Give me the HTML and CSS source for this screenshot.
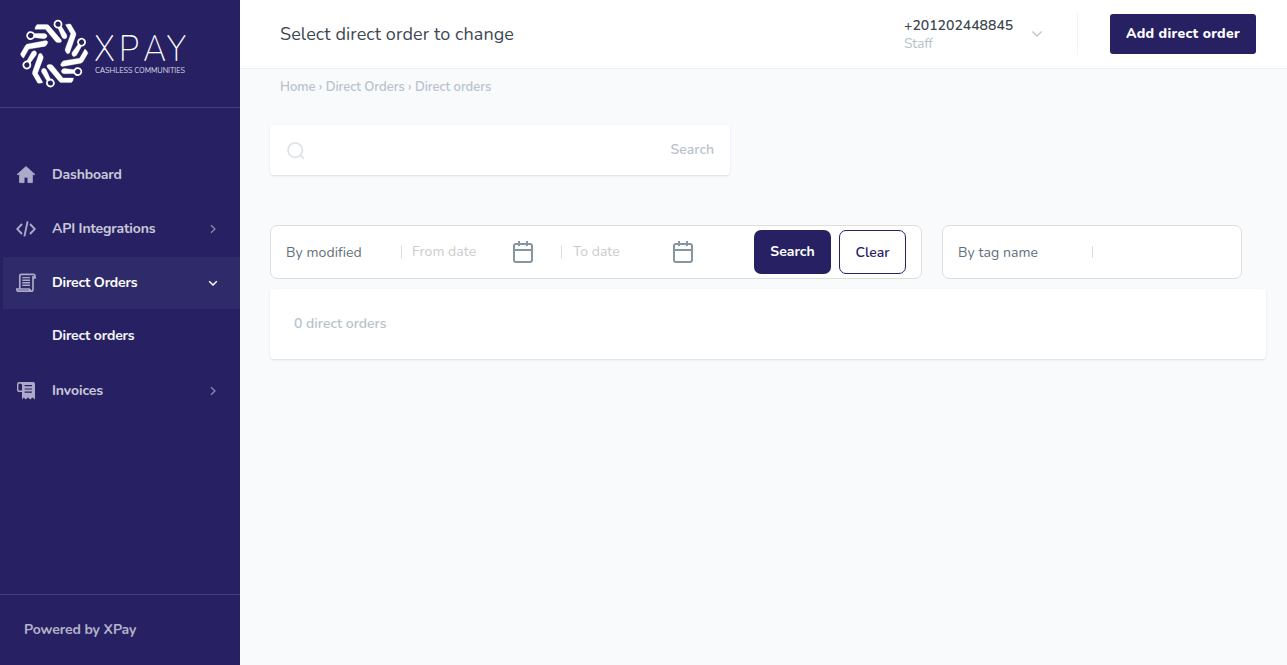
FILE: index.html
```
<!DOCTYPE html>
<html lang="en">
<head>
<meta charset="utf-8">
<title>Select direct order to change</title>
<link rel="stylesheet" href="styles.css">
</head>
<body>
<div class="app">
  <aside class="sidebar">
    <div class="brand">
      <svg width="240" height="107" viewBox="0 0 240 107">
        <defs>
          <g id="arm">
            <path class="bar" d="M-17.2-29H-7.6Q-6-29-5-27.8L7.2-13.5Q7.4-11 6-11H3.6Q2.2-11 1.4-12L-8.8-24.3H-19.4Q-19-27.5-17.2-29Z"/>
            <path class="bar" d="M3.6-26L7.4-27.2L12.6-18.5Q13.2-15.4 11.2-14.8Q8.8-14.4 7.8-16.4Z"/>
            <circle class="node" cx="3.8" cy="-29.4" r="3.5"/>
          </g>
        </defs>
        <g transform="translate(54.2 53.6)">
          <use href="#arm"/>
          <use href="#arm" transform="rotate(60)"/>
          <use href="#arm" transform="rotate(120)"/>
          <use href="#arm" transform="rotate(180)"/>
          <use href="#arm" transform="rotate(240)"/>
          <use href="#arm" transform="rotate(300)"/>
        </g>
        <text class="wordmark" transform="scale(.9 1)" x="104.6 132.2 159 185.6" y="61.5">XPAY</text>
        <text class="tagline" x="95" y="72.5" textLength="90">CASHLESS COMMUNITIES</text>
      </svg>
    </div>
    <nav class="menu">
      <a class="item"><svg class="icon" viewBox="0 0 20 20"><path d="M10 1.5L19 9.6H16.4V17.6H11.9V12.2H8.1V17.6H3.6V9.6H1Z" fill="currentColor" stroke="currentColor" stroke-width=".8" stroke-linejoin="round"/></svg><span>Dashboard</span></a>
      <a class="item"><svg class="icon line" viewBox="0 0 20 20"><path d="M6 5L1.2 10L6 15M14 5L18.8 10L14 15M11.6 2.4L8.4 17.4"/></svg><span>API Integrations</span><svg class="chev" viewBox="0 0 10 10"><path d="M3 1.2L7 5L3 8.8"/></svg></a>
      <a class="item active"><svg class="icon" viewBox="0 0 20 20"><path class="scroll" d="M3.8 16V3Q3.8 1.3 5.5 1.3H17.2Q19 1.3 19 3.2V5H17V16.5Q17 18.2 15 18.2H2.5Q.8 18.2.8 16H13Q13 17 15 17M17 5V3"/><path class="thin" d="M6.3 4.6H14M6.3 7.2H14M6.3 9.8H14M6.3 12.3H14"/></svg><span>Direct Orders</span><svg class="chev" viewBox="0 0 10 10"><path d="M1.2 3.2L5 7L8.8 3.2"/></svg></a>
      <a class="item sub"><span>Direct orders</span></a>
      <a class="item last"><svg class="icon" viewBox="0 0 20 20"><path fill="currentColor" fill-rule="evenodd" d="M3.2 1H17Q19 1 19 3V18.5L16.6 16.5L14.2 18.5L12 16.5L9.6 18.5L7.8 16.5L6 18.5V11H3Q1 11 1 9V3.2Q1 1 3.2 1ZM3.8 2.4Q2.4 2.4 2.4 4V8.2Q2.4 9.6 4 9.6H6V4Q6 2.4 3.8 2.4Z"/><path class="rows" d="M8.6 4.7H16M8.6 8H16M8.6 11.2H16"/></svg><span>Invoices</span><svg class="chev" viewBox="0 0 10 10"><path d="M3 1.2L7 5L3 8.8"/></svg></a>
    </nav>
    <div class="powered"><span>Powered by XPay</span></div>
  </aside>
  <div class="page">
    <header class="topbar">
      <h1>Select direct order to change</h1>
      <div class="user"><span class="phone">+201202448845</span><span class="role">Staff</span></div>
      <svg class="user-chev" viewBox="0 0 12 12"><path d="M1.5 3.5L6 8.2L10.5 3.5"/></svg>
      <div class="divider"></div>
      <button class="add">Add direct order</button>
    </header>
    <main>
      <div class="crumbs">Home › Direct Orders › Direct orders</div>
      <div class="search card">
        <svg class="mag" viewBox="0 0 20 20"><circle cx="9.2" cy="9.2" r="7.2"/><path d="M14.4 14.4L18 18"/></svg>
        <span>Search</span>
      </div>
      <div class="filters">
        <div class="filter modified">
          <label>By modified</label>
          <div class="date from"><span>From date</span><svg class="cal" viewBox="0 0 20 22"><path d="M3 3H17Q19 3 19 5V19Q19 21 17 21H3Q1 21 1 19V5Q1 3 3 3ZM1 9H19M6 0V5M14 0V5"/></svg></div>
          <div class="date to"><span>To date</span><svg class="cal" viewBox="0 0 20 22"><path d="M3 3H17Q19 3 19 5V19Q19 21 17 21H3Q1 21 1 19V5Q1 3 3 3ZM1 9H19M6 0V5M14 0V5"/></svg></div>
          <button class="go">Search</button>
          <button class="clear">Clear</button>
        </div>
        <div class="filter tag"><label>By tag name</label><div class="date"></div></div>
      </div>
      <div class="results card"><span>0 direct orders</span></div>
    </main>
  </div>
</div>
</body>
</html>
```
FILE: styles.css
```
* { box-sizing: border-box; }
body { margin: 0; font-family: Nunito, Lato, sans-serif; font-size: 14px; line-height: 20px; background: #f9fafc; color: #3d4852; overflow: hidden; }
svg { display: block; flex: none; }
span { white-space: nowrap; }
button { font: inherit; padding: 0; border: 0; }
.app { display: flex; height: 665px; }

.sidebar { width: 240px; flex: none; background: #272163; display: flex; flex-direction: column; color: rgba(255,255,255,.77); font-weight: 700; letter-spacing: -.17px; }
.brand { height: 108px; border-bottom: 1px solid #46417a; letter-spacing: 0; }
.bar { fill: #fff; stroke: #fff; stroke-width: .3; }
.node { fill: #272163; stroke: #fff; stroke-width: 1.8; }
.wordmark { font-size: 36px; font-weight: 250; fill: #fff; }
.tagline { font-size: 7.4px; font-weight: 400; fill: #dddcea; }
.menu { flex: 1; padding-top: 41px; }
.item { display: flex; align-items: center; height: 52px; margin: 0 0 2px 3px; padding: 0 22px 0 13px; }
.item span { flex: 1; }
.icon { width: 20px; height: 20px; margin: 0 16px 0 0; color: #ada9c8; fill: none; }
.icon.line { stroke: currentColor; stroke-width: 1.9; }
.scroll { stroke: currentColor; stroke-width: 1.7; }
.thin { stroke: currentColor; stroke-width: 1.4; }
.rows { stroke: #272163; stroke-width: 1.2; }
.chev { width: 10px; height: 10px; fill: none; stroke: #908db1; stroke-width: 1.2; }
.active { background: #2f2a69; color: #fff; }
.active .chev { stroke: #fff; stroke-width: 1.5; }
.sub { padding-left: 49px; padding-bottom: 2px; color: #f5f5fa; }
.last { margin-top: 1px; letter-spacing: -.1px; }
.powered { height: 71px; border-top: 1px solid #46417a; padding: 25px 24px 0; color: #b5b3cb; letter-spacing: -.1px; }

.page { flex: 1; min-width: 0; }
.topbar { display: flex; height: 69px; background: #fff; border-bottom: 1px solid #edf1f5; padding: 0 31px 0 40px; }
h1 { flex: 1; margin: 24px 0 0; font-size: 18px; line-height: 20px; font-weight: 400; letter-spacing: .09px; color: #3d4852; }
.user { width: 127px; padding-top: 17px; display: flex; flex-direction: column; line-height: 18px; }
.phone { font-weight: 600; color: #3d4852; }
.role { color: #b8c2cc; letter-spacing: -.25px; }
.user-chev { width: 12px; height: 12px; margin-top: 28px; fill: none; stroke: #b8c2cc; stroke-width: 1.2; }
.divider { width: 1px; height: 42px; margin: 13px 32px 0 34px; background: #f0f2f5; }
.add { width: 146px; height: 40px; margin-top: 14px; border-radius: 3px; background: #272163; color: #fff; font-weight: 800; letter-spacing: .3px; }

main { padding: 8px 21px 0 30px; }
.crumbs { height: 20px; padding-left: 10px; font-size: 13px; color: #b8c2cc; font-weight: 600; letter-spacing: -.04px; }
.card { background: #fff; border-radius: 3px; box-shadow: 0 1px 2px rgba(50,80,120,.16); }
.search { display: flex; justify-content: space-between; width: 460px; height: 50px; margin-top: 28px; padding: 15px 16px 0; color: #b8c2cc; font-weight: 600; }
.mag { width: 20px; height: 20px; margin-top: 1px; fill: none; stroke: #dae1e7; stroke-width: 1.6; }
.filters { display: flex; gap: 20px; margin-top: 50px; }
.filter { display: flex; height: 54px; background: #fff; border: 1px solid #dedede; border-radius: 7px; padding-left: 15px; }
.modified { width: 652px; }
.tag { width: 300px; }
.filter label { flex: none; width: 115px; padding-top: 17px; color: #606f7b; letter-spacing: .08px; }
.filter.tag label { width: 134px; }
.date { display: flex; width: 160px; height: 12px; margin-top: 20px; border-left: 1px solid #dcdcdc; align-items: center; justify-content: space-between; color: #ccc; line-height: 12px; }
.from { padding: 0 28px 0 10px; letter-spacing: .05px; }
.to { padding: 0 28px 0 11px; }
.tag .date { width: 140px; }
.cal { width: 20px; height: 22px; fill: none; stroke: #8795a1; stroke-width: 2; }
.go, .clear { height: 44px; margin-top: 4px; border-radius: 7px; font-weight: 700; }
.go { width: 77px; margin-left: 33px; background: #272163; color: #fff; }
.clear { width: 67px; margin-left: 8px; padding-top: 2px; background: #fff; border: 1px solid #272163; color: #272163; font-weight: 600; }
.results { height: 70px; margin-top: 10px; padding: 25px 24px; color: #b8c2cc; font-weight: 600; }
```
